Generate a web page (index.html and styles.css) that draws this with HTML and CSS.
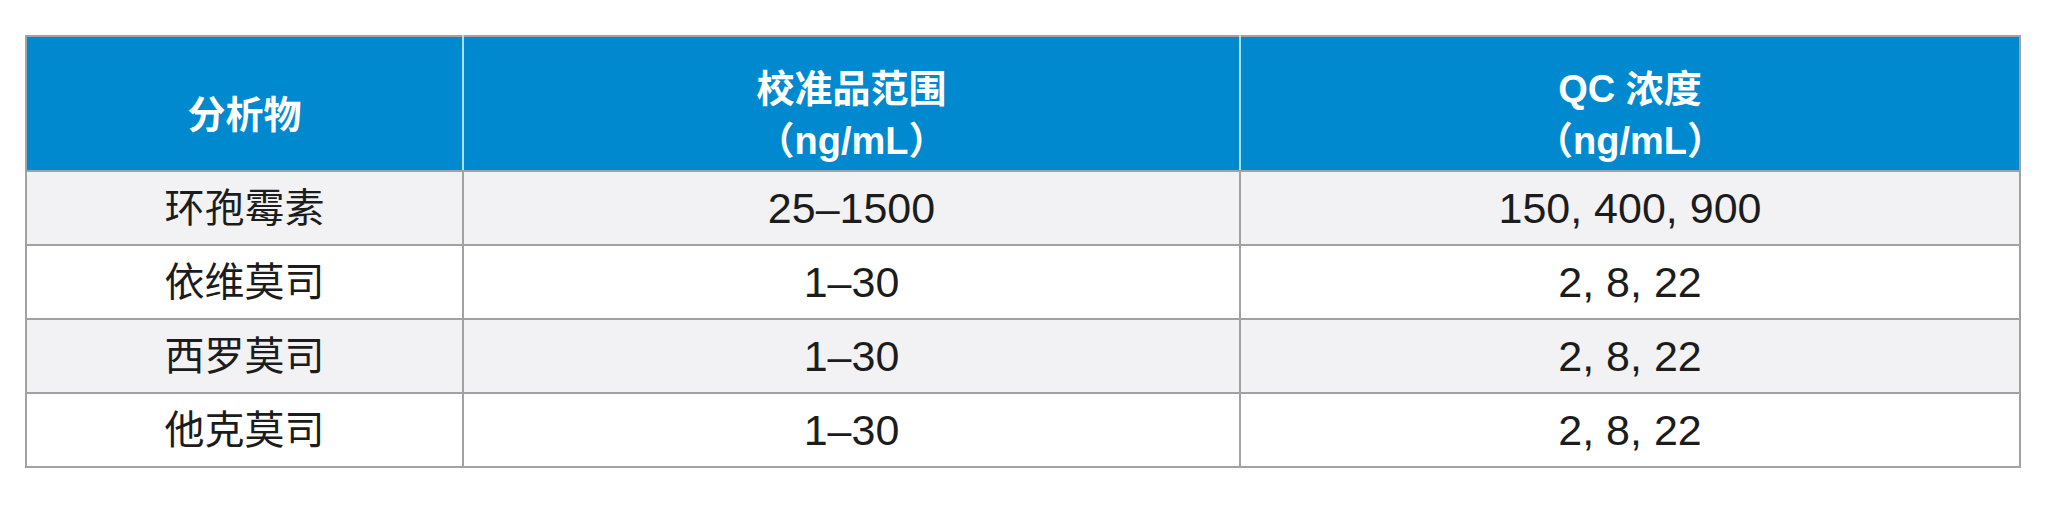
FILE: index.html
```html
<!DOCTYPE html>
<html lang="zh-CN">
<head>
<meta charset="utf-8">
<title>分析物</title>
<link rel="stylesheet" href="styles.css">
</head>
<body>
<div class="page">
  <table class="data">
    <colgroup>
      <col class="c1"><col class="c2"><col class="c3">
    </colgroup>
    <thead>
      <tr>
        <th>分析物</th>
        <th>校准品范围<br>（ng/mL）</th>
        <th>QC 浓度<br>（ng/mL）</th>
      </tr>
    </thead>
    <tbody>
      <tr class="alt"><td>环孢霉素</td><td class="num">25–1500</td><td class="num">150, 400, 900</td></tr>
      <tr><td>依维莫司</td><td class="num">1–30</td><td class="num">2, 8, 22</td></tr>
      <tr class="alt"><td>西罗莫司</td><td class="num">1–30</td><td class="num">2, 8, 22</td></tr>
      <tr><td>他克莫司</td><td class="num">1–30</td><td class="num">2, 8, 22</td></tr>
    </tbody>
  </table>
</div>
</body>
</html>
```

FILE: styles.css
```css
html, body {
  margin: 0;
  padding: 0;
  background: #ffffff;
}

.page {
  padding: 35px 0 0 25px;
}

.data {
  border-collapse: collapse;
  width: 1994px;
  table-layout: fixed;
  font-family: "Liberation Sans", "Noto Sans CJK SC", sans-serif;
  color: #1c1c1c;
  border: 2px solid #a2a2a4;
}

.c1 { width: 437px; }
.c2 { width: 777px; }
.c3 { width: 780px; }

.data th {
  background: #0089cf;
  color: #ffffff;
  font-family: "Liberation Sans", "Noto Sans CJK SC", sans-serif;
  font-weight: 700;
  font-size: 38px;
  line-height: 52px;
  height: 135px;
  padding: 22px 0 0 0;
  box-sizing: border-box;
  text-align: center;
  vertical-align: middle;
  border-left: 2px solid #a6e3f4;
  border-bottom: 2px solid #a2a2a4;
}

.data th:first-child {
  border-left: 2px solid #a2a2a4;
}

.data td {
  font-size: 40px;
  height: 72px;
  padding: 0;
  text-align: center;
  vertical-align: middle;
  border: 2px solid #a2a2a4;
  line-height: 48px;
}

.data td.num {
  font-size: 43px;
}

.data tr.alt td {
  background: #f2f2f4;
}
```
